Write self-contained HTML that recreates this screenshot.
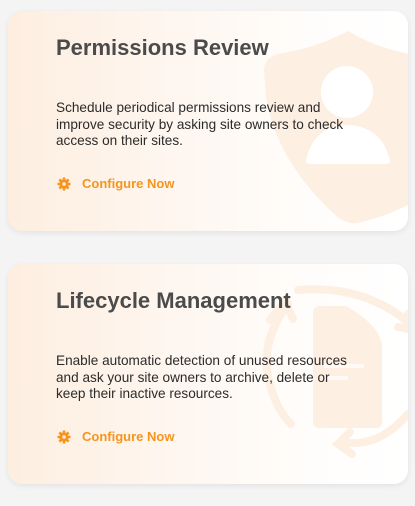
<!DOCTYPE html>
<html><head><style>
body{margin:0;background:#f4f4f4;width:415px;height:506px;overflow:hidden;font-family:"Liberation Sans",sans-serif;}
.card{position:absolute;left:8px;width:400px;height:220px;border-radius:14px;overflow:hidden;
background:linear-gradient(90deg,#fdeee0 0%,#fef6ef 40%,#fffdfb 75%,#fff 100%);box-shadow:0 2px 6px rgba(0,0,0,0.07);}
.card svg{position:absolute;left:0;top:0}
h2{position:absolute;left:48px;margin:0;font-size:22px;font-weight:bold;color:#4b4b4b;letter-spacing:0px}
p{position:absolute;left:48px;margin:0;font-size:13.6px;line-height:16.5px;color:#2b2b2b;width:300px}
.cfg{position:absolute;left:49px;font-size:13px;font-weight:bold;color:#f7941d;display:flex;align-items:center}
.cfg svg{position:static;margin-right:11px}
</style></head><body>
<div class="card" style="top:11px">
<svg width="400" height="220"><path d="M340 20 Q370 38 408 44 L408 190 Q380 205 350 212 Q340 214 328 205 Q268 150 258 85 L256 58 Q258 44 275 42 Q310 36 340 20Z" fill="#fdefe2"/>
<circle cx="339" cy="81" r="26" fill="#fff"/><path d="M298 150 Q305 115 339 114 Q374 115 382 150 Q382 153 378 153 L302 153 Q298 153 298 150Z" fill="#fff"/></svg>
<h2 style="top:24px">Permissions Review</h2>
<p style="top:89px">Schedule periodical permissions review and improve security by asking site owners to check access on their sites.</p>
<div class="cfg" style="top:165px"><svg width="14" height="14" viewBox="0 0 14 14"><g fill="#f7941d"><circle cx="7" cy="7" r="4.6"/><g stroke="#f7941d" stroke-width="2.6"><path d="M7 0.5V13.5M0.5 7H13.5M2.4 2.4L11.6 11.6M11.6 2.4L2.4 11.6"/></g></g><circle cx="7" cy="7" r="1.8" fill="#fdeee0"/></svg>Configure Now</div>
</div>
<div class="card" style="top:264px">
<svg width="400" height="220"><g fill="none" stroke="#fdefe2" stroke-width="8" stroke-linecap="round">
<path d="M290 26 Q360 20 408 65"/><path d="M390 63 L406 66 L400 50"/>
<path d="M280 40 Q250 80 262 120 Q268 145 283 160"/><path d="M262 56 L277 37 L285 55"/>
<path d="M400 150 Q370 185 333 178"/><path d="M342 168 L330 180 L344 190"/></g>
<path d="M312 42 L338 42 Q370 60 374 80 L374 158 Q374 164 368 164 L312 164 Q305 164 305 158 L305 50 Q305 42 312 42Z" fill="#fdefe2"/>
<rect x="316" y="100" width="40" height="4" fill="#fffaf5"/><rect x="316" y="112" width="24" height="4" fill="#fffaf5"/></svg>
<h2 style="top:24px">Lifecycle Management</h2>
<p style="top:89px">Enable automatic detection of unused resources and ask your site owners to archive, delete or keep their inactive resources.</p>
<div class="cfg" style="top:165px"><svg width="14" height="14" viewBox="0 0 14 14"><g fill="#f7941d"><circle cx="7" cy="7" r="4.6"/><g stroke="#f7941d" stroke-width="2.6"><path d="M7 0.5V13.5M0.5 7H13.5M2.4 2.4L11.6 11.6M11.6 2.4L2.4 11.6"/></g></g><circle cx="7" cy="7" r="1.8" fill="#fdeee0"/></svg>Configure Now</div>
</div>
</body></html>
